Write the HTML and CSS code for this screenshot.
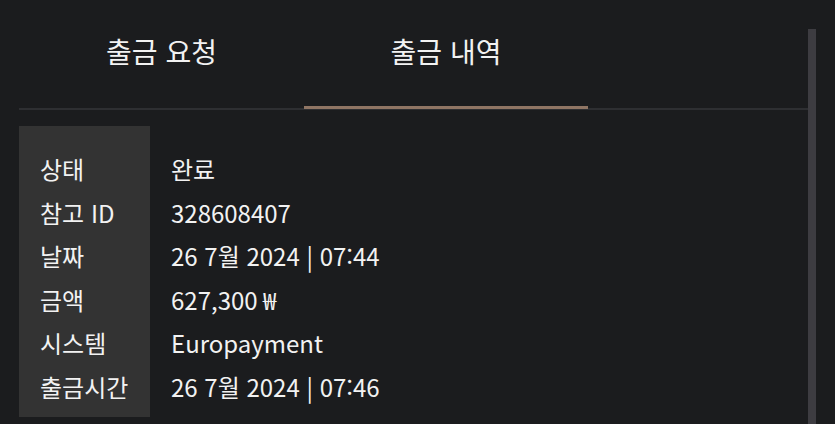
FILE: index.html
```html
<!DOCTYPE html>
<html lang="ko">
<head>
<meta charset="utf-8">
<link rel="stylesheet" href="styles.css">
</head>
<body>
<div class="page">
  <div class="main">
    <div class="tabs">
      <div class="tab">출금 요청</div>
      <div class="tab active">출금 내역</div>
    </div>
    <div class="details">
      <div class="labels">
        <div class="row">상태</div>
        <div class="row">참고 ID</div>
        <div class="row">날짜</div>
        <div class="row">금액</div>
        <div class="row">시스템</div>
        <div class="row">출금시간</div>
      </div>
      <div class="values">
        <div class="row">완료</div>
        <div class="row">328608407</div>
        <div class="row">26 7월 2024 | 07:44</div>
        <div class="row">627,300 ₩</div>
        <div class="row">Europayment</div>
        <div class="row">26 7월 2024 | 07:46</div>
      </div>
    </div>
  </div>
  <div class="scrollbar"></div>
</div>
</body>
</html>
```

FILE: styles.css
```css
html, body {
  margin: 0;
  padding: 0;
  background: #1b1c1e;
  height: 100%;
  overflow: hidden;
}
body {
  font-family: "Noto Sans CJK KR", "Noto Sans", sans-serif;
  color: #f2f2f2;
}
.page {
  display: flex;
  height: 424px;
}
.main {
  margin-left: 19px;
  width: 789px;
}
.scrollbar {
  margin-top: 29px;
  width: 8px;
  background: #3d3c41;
}
.tabs {
  display: flex;
  height: 108px;
  border-bottom: 2px solid #2e2f32;
}
.tab {
  position: relative;
  width: 285px;
  font-size: 28px;
  line-height: 1;
  padding-top: 37px;
  text-align: center;
  box-sizing: border-box;
}
.tab.active {
  width: 284px;
}
.tab.active::after {
  content: "";
  position: absolute;
  left: 0;
  right: 0;
  bottom: -1px;
  height: 3px;
  background: #8f7564;
}
.details {
  display: flex;
  margin-top: 16px;
  font-size: 24px;
}
.labels {
  width: 131px;
  box-sizing: border-box;
  background: #333333;
  padding: 21px 0 9px 21px;
}
.values {
  padding: 21px 0 9px 21px;
}
.row {
  height: 43.5px;
  line-height: 43.5px;
  white-space: nowrap;
}
```
